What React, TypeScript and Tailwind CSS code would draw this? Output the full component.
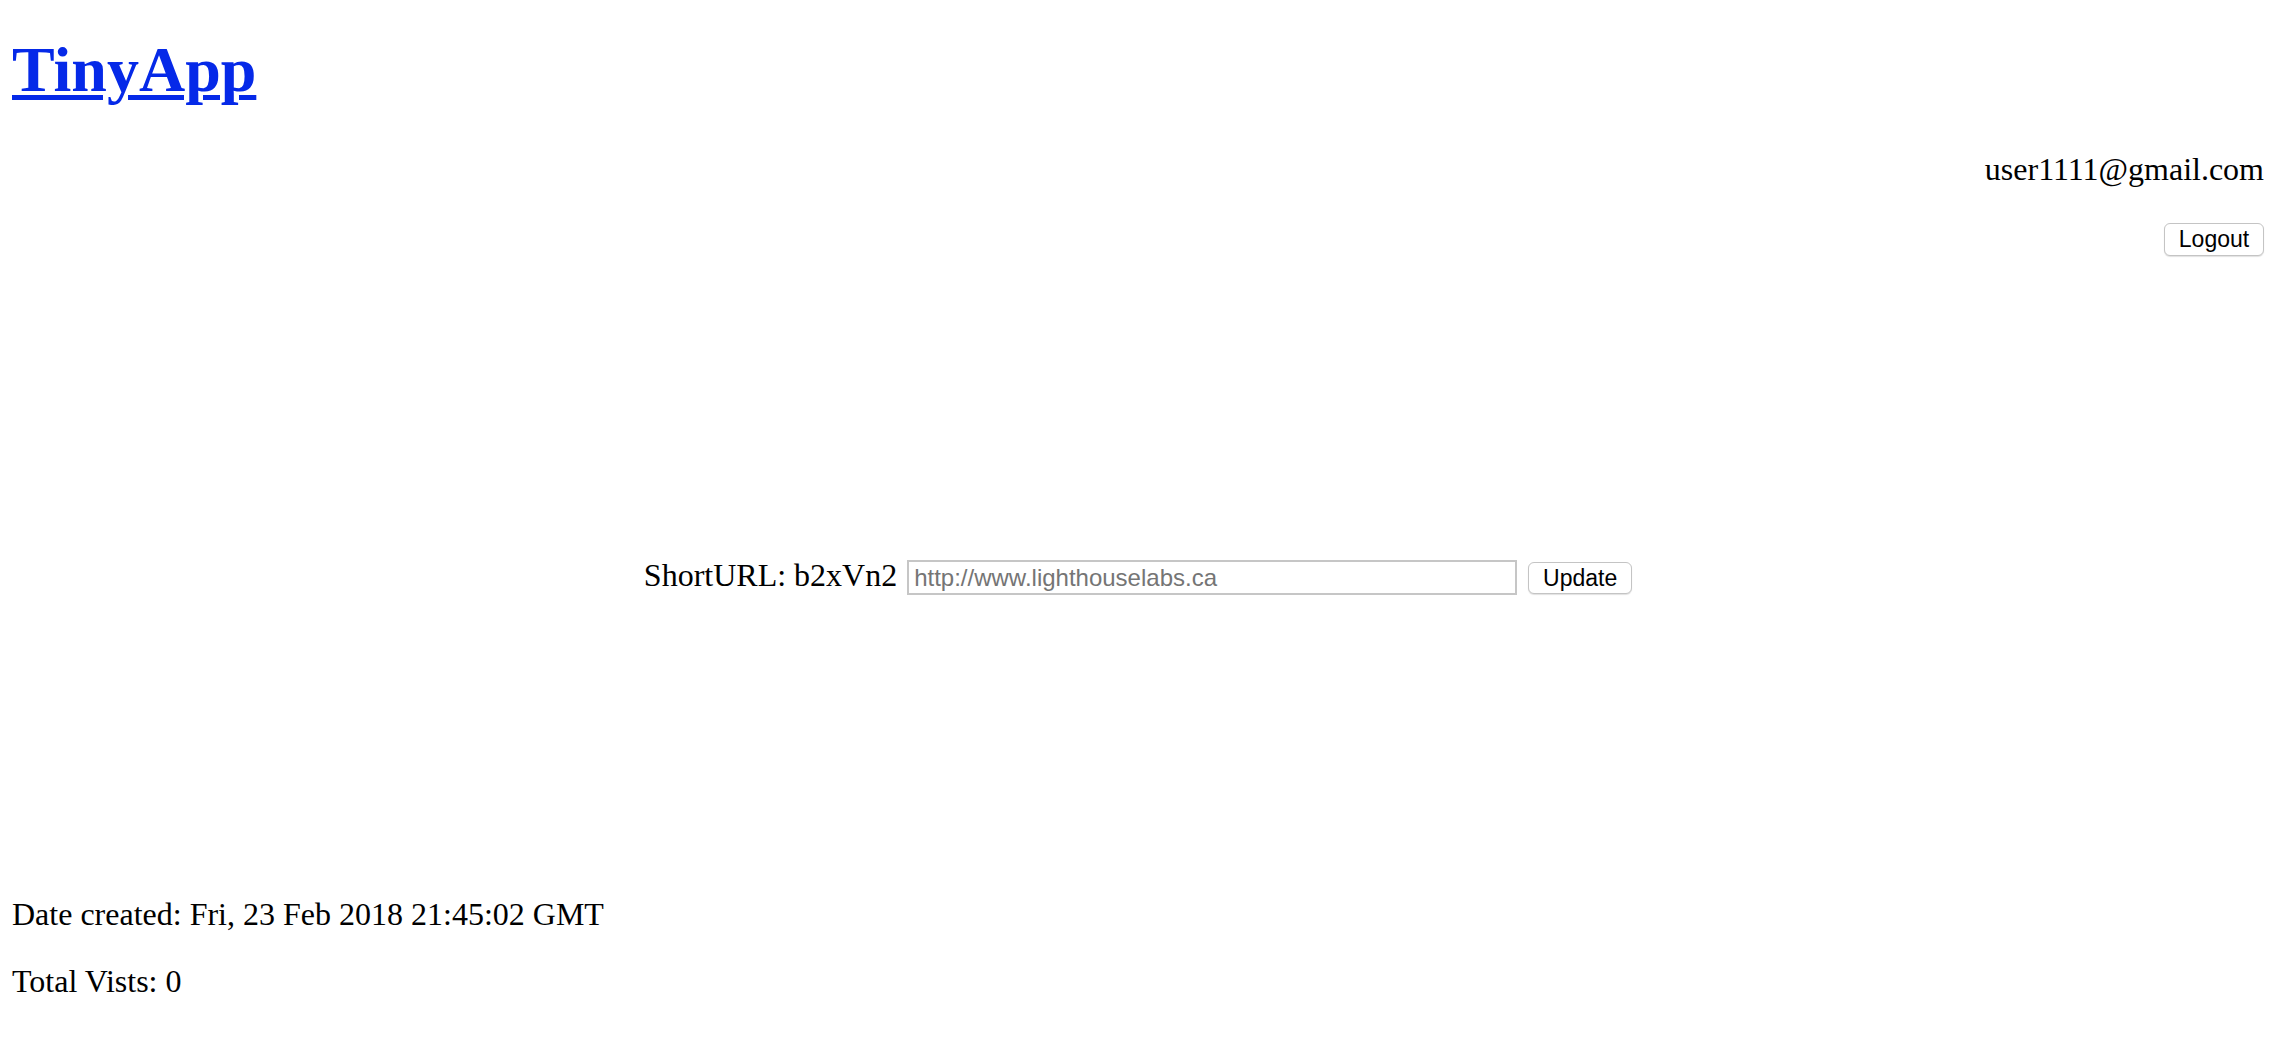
import React from "react";

export default function App() {
  return (
    <div className="min-h-[1060px] bg-white px-[12px] pt-[33px] font-['Liberation_Serif','Times_New_Roman',serif] text-[32px] text-black">
      <h1 className="text-[64px] font-bold leading-[74px]">
        <a
          href="#"
          className="text-[#0529e8] underline decoration-[5px] underline-offset-[4px]"
        >
          TinyApp
        </a>
      </h1>
      <div className="mt-[44px] text-right leading-[37px]">user1111@gmail.com</div>
      <div className="mt-[35px] flex justify-end">
        <button className="h-[33px] w-[100px] rounded-[6px] border border-[#c4c4c4] bg-white font-['Liberation_Sans',Arial,sans-serif] text-[23px] leading-none text-black shadow-[0_1px_1px_rgba(0,0,0,0.12)]">
          Logout
        </button>
      </div>
      <div className="mt-[301px] flex items-start justify-center">
        <span className="leading-[37px]">ShortURL: b2xVn2</span>
        <input
          type="text"
          placeholder="http://www.lighthouselabs.ca"
          className="ml-[10px] mt-[3px] h-[35px] w-[610px] border-2 border-[#c6c6c6] bg-white px-[5px] font-['Liberation_Sans',Arial,sans-serif] text-[24px] text-black outline-none placeholder:text-[#757575]"
        />
        <button className="ml-[11px] mt-[5px] h-[32px] w-[104px] rounded-[6px] border border-[#c4c4c4] bg-white font-['Liberation_Sans',Arial,sans-serif] text-[23px] leading-none text-black shadow-[0_1px_1px_rgba(0,0,0,0.12)]">
          Update
        </button>
      </div>
      <div className="mt-[301px] leading-[37px]">Date created: Fri, 23 Feb 2018 21:45:02 GMT</div>
      <div className="mt-[30px] leading-[37px]">Total Vists: 0</div>
    </div>
  );
}
